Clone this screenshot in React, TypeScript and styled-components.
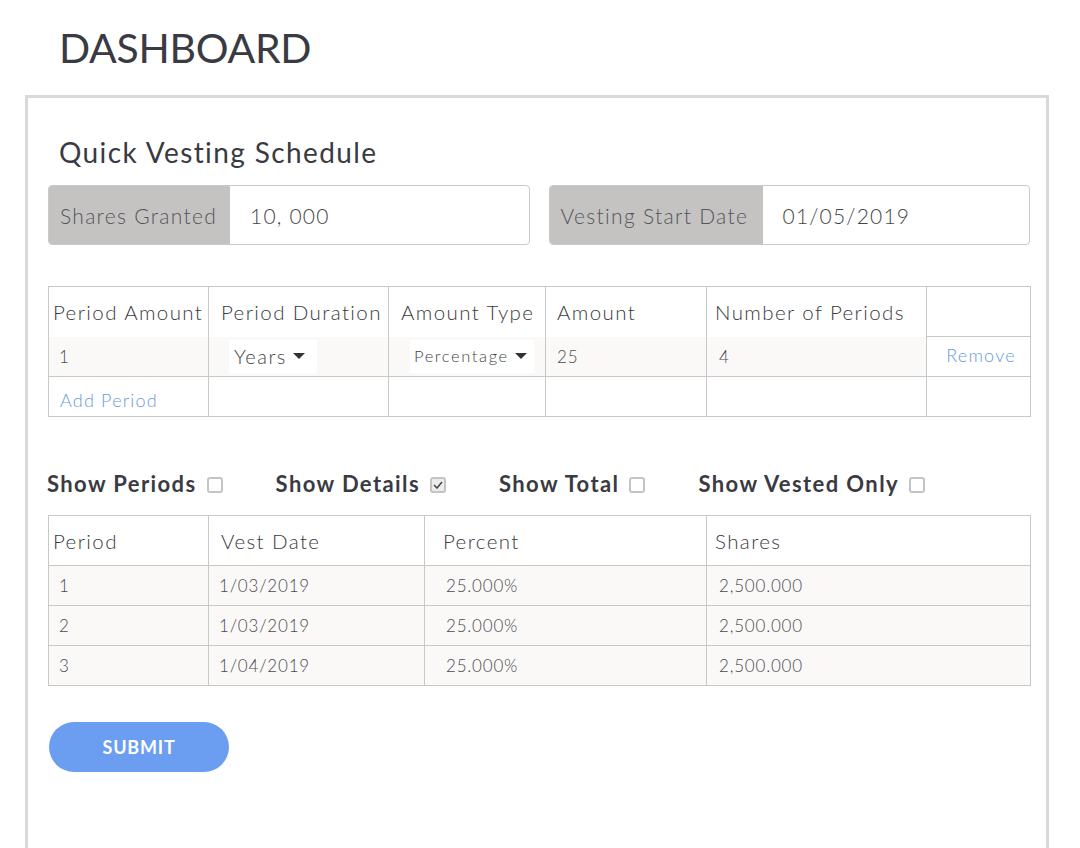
import React from "react";
import styled, { createGlobalStyle } from "styled-components";

const Global = createGlobalStyle`
  html, body { margin: 0; padding: 0; background: #ffffff; }
  body { font-family: "Lato", "Open Sans", sans-serif; color: #3b3b42; }
  * { box-sizing: border-box; }
`;

const Page = styled.div`
  width: 1080px;
  height: 848px;
  overflow: hidden;
  padding-top: 22px;
`;

const Title = styled.h1`
  margin: 0 0 0 59px;
  font-family: "Lato", sans-serif;
  font-weight: 400;
  font-size: 41px;
  line-height: 52px;
  letter-spacing: -0.3px;
  color: #3a3a42;
`;

const Card = styled.section`
  margin: 21px 0 0 25px;
  width: 1024px;
  height: 800px;
  border: 3px solid #d9d9d9;
  border-bottom: none;
  padding: 36px 16px 0 20px;
`;

const SectionTitle = styled.h2`
  margin: 0 0 15px 11px;
  font-weight: 400;
  font-size: 28px;
  line-height: 36px;
  letter-spacing: 1.4px;
  color: #3a3a42;
`;

const InputRow = styled.div`
  display: grid;
  grid-template-columns: 1fr 1fr;
  gap: 19px;
`;

const InputGroup = styled.div`
  display: flex;
  height: 60px;
  border: 1px solid #c9c9c9;
  border-radius: 4px;
  overflow: hidden;
`;

const GroupLabel = styled.div<{ $w: number }>`
  width: ${(p) => p.$w}px;
  flex: none;
  background: #c4c3c2;
  display: flex;
  align-items: center;
  padding-left: 11px;
  font-weight: 300;
  font-size: 21px;
  color: #55555a;
  letter-spacing: 1.3px;
`;

const GroupValue = styled.div`
  flex: 1;
  display: flex;
  align-items: center;
  padding-left: 20px;
  font-weight: 300;
  font-size: 21px;
  color: #444448;
  letter-spacing: 1.2px;
`;

const Table = styled.table`
  width: 982px;
  border-collapse: collapse;
  table-layout: fixed;
  margin-top: 41px;
  color: #3f3f44;
`;

const HeadCell = styled.th<{ $pl?: number }>`
  height: 50px;
  border-left: 1px solid #c8c8c8;
  border-right: 1px solid #c8c8c8;
  border-top: 1px solid #c8c8c8;
  padding: 0 0 0 ${(p) => p.$pl ?? 5}px;
  text-align: left;
  font-weight: 300;
  font-size: 20.5px;
  letter-spacing: 1.4px;
  white-space: nowrap;
  overflow: hidden;
  color: #3a3a40;
`;

const Cell = styled.td<{ $pl?: number; $pt?: number; $pb?: number; $shade?: boolean; $topLine?: boolean; $center?: boolean }>`
  height: 40px;
  border-left: 1px solid #c8c8c8;
  border-right: 1px solid #c8c8c8;
  border-bottom: 1px solid #c8c8c8;
  border-top: ${(p) => (p.$topLine ? "1px solid #c8c8c8" : "none")};
  background: ${(p) => (p.$shade ? "#faf9f8" : "#ffffff")};
  padding: ${(p) => p.$pt ?? 0}px 0 ${(p) => p.$pb ?? 0}px ${(p) => p.$pl ?? 5}px;
  text-align: ${(p) => (p.$center ? "center" : "left")};
  font-weight: 300;
  font-size: 17px;
  letter-spacing: 0.8px;
  color: #4a4a50;
  white-space: nowrap;
`;

const SelectBox = styled.span<{ $small?: boolean }>`
  display: inline-flex;
  align-items: center;
  gap: 6px;
  height: 33px;
  padding: 0 ${(p) => (p.$small ? 7 : 12)}px 0 ${(p) => (p.$small ? 4 : 5)}px;
  background: #ffffff;
  font-weight: 300;
  font-size: ${(p) => (p.$small ? 16.5 : 20)}px;
  letter-spacing: ${(p) => (p.$small ? 1.6 : 1.5)}px;
  color: #3f3f44;
`;

const Caret = styled.span`
  width: 0;
  height: 0;
  border-left: 6px solid transparent;
  border-right: 6px solid transparent;
  border-top: 6px solid #333;
`;

const LinkText = styled.span<{ $size: number }>`
  color: #6b99d8;
  font-weight: 300;
  font-size: ${(p) => p.$size}px;
  letter-spacing: 1.2px;
`;

const Toggles = styled.div`
  display: flex;
  align-items: center;
  gap: 53px;
  margin: 53px 0 0 -1px;
`;

const Toggle = styled.label`
  display: flex;
  align-items: center;
  gap: 10px;
  font-weight: 700;
  font-size: 22px;
  letter-spacing: 1.4px;
  color: #3a3a42;
`;

const Box = styled.span<{ $on?: boolean }>`
  width: 16px;
  height: 16px;
  border: 2px solid #c4c4c4;
  border-radius: 3px;
  background: ${(p) => (p.$on ? "#ececec" : "#fff")};
  display: inline-flex;
  align-items: center;
  justify-content: center;
  margin-top: 2px;
`;

const Table2 = styled(Table)`
  margin-top: 18px;
`;

const SubmitButton = styled.button`
  margin: 36px 0 0 1px;
  width: 180px;
  height: 50px;
  border: none;
  border-radius: 25px;
  background: #6b9ef0;
  color: #ffffff;
  font-family: "Lato", sans-serif;
  font-weight: 700;
  font-size: 18px;
  letter-spacing: 0.8px;
`;

const details = [
  { p: "1", d: "1/03/2019", pc: "25.000%", s: "2,500.000" },
  { p: "2", d: "1/03/2019", pc: "25.000%", s: "2,500.000" },
  { p: "3", d: "1/04/2019", pc: "25.000%", s: "2,500.000" },
];

export default function App() {
  return (
    <Page>
      <Global />
      <Title>DASHBOARD</Title>
      <Card>
        <SectionTitle>Quick Vesting Schedule</SectionTitle>
        <InputRow>
          <InputGroup>
            <GroupLabel $w={181}>Shares Granted</GroupLabel>
            <GroupValue>10, 000</GroupValue>
          </InputGroup>
          <InputGroup>
            <GroupLabel $w={213}>Vesting Start Date</GroupLabel>
            <GroupValue>01/05/2019</GroupValue>
          </InputGroup>
        </InputRow>

        <Table>
          <colgroup>
            <col style={{ width: 160 }} />
            <col style={{ width: 180 }} />
            <col style={{ width: 157 }} />
            <col style={{ width: 161 }} />
            <col style={{ width: 220 }} />
            <col style={{ width: 104 }} />
          </colgroup>
          <thead>
            <tr>
              <HeadCell $pl={4}>Period Amount</HeadCell>
              <HeadCell $pl={12}>Period Duration</HeadCell>
              <HeadCell $pl={12}>Amount Type</HeadCell>
              <HeadCell $pl={11}>Amount</HeadCell>
              <HeadCell $pl={8}>Number of Periods</HeadCell>
              <HeadCell />
            </tr>
          </thead>
          <tbody>
            <tr>
              <Cell $shade $pl={10}>1</Cell>
              <Cell $shade $pl={20}>
                <SelectBox>
                  Years <Caret />
                </SelectBox>
              </Cell>
              <Cell $shade $pl={21}>
                <SelectBox $small>
                  Percentage <Caret />
                </SelectBox>
              </Cell>
              <Cell $shade $pl={11}>25</Cell>
              <Cell $shade $pl={12}>4</Cell>
              <Cell $topLine $center $pb={3}>
                <LinkText $size={18}>Remove</LinkText>
              </Cell>
            </tr>
            <tr>
              <Cell $pl={11} $pt={6}>
                <LinkText $size={18}>Add Period</LinkText>
              </Cell>
              <Cell />
              <Cell />
              <Cell />
              <Cell />
              <Cell />
            </tr>
          </tbody>
        </Table>

        <Toggles>
          <Toggle>
            Show Periods <Box />
          </Toggle>
          <Toggle>
            Show Details{" "}
            <Box $on>
              <svg width="10" height="8" viewBox="0 0 10 8">
                <path d="M1 4 L4 7 L9 1" fill="none" stroke="#444" strokeWidth="1.5" />
              </svg>
            </Box>
          </Toggle>
          <Toggle>
            Show Total <Box />
          </Toggle>
          <Toggle>
            Show Vested Only <Box />
          </Toggle>
        </Toggles>

        <Table2>
          <colgroup>
            <col style={{ width: 160 }} />
            <col style={{ width: 216 }} />
            <col style={{ width: 282 }} />
            <col style={{ width: 324 }} />
          </colgroup>
          <thead>
            <tr>
              <HeadCell $pl={4}>Period</HeadCell>
              <HeadCell $pl={12}>Vest Date</HeadCell>
              <HeadCell $pl={18}>Percent</HeadCell>
              <HeadCell $pl={8}>Shares</HeadCell>
            </tr>
          </thead>
          <tbody>
            {details.map((r) => (
              <tr key={r.p}>
                <Cell $shade $topLine $pl={10}>{r.p}</Cell>
                <Cell $shade $topLine $pl={10}>{r.d}</Cell>
                <Cell $shade $topLine $pl={21}>{r.pc}</Cell>
                <Cell $shade $topLine $pl={12}>{r.s}</Cell>
              </tr>
            ))}
          </tbody>
        </Table2>

        <SubmitButton>SUBMIT</SubmitButton>
      </Card>
    </Page>
  );
}
